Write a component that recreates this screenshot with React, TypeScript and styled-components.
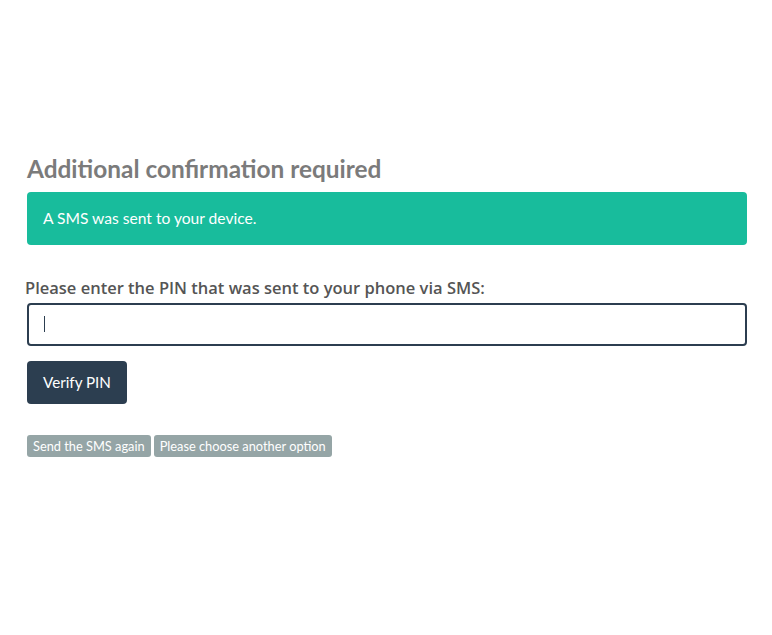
import React from "react";
import styled, { createGlobalStyle } from "styled-components";

const GlobalStyle = createGlobalStyle`
  html, body {
    margin: 0;
    padding: 0;
    background: #ffffff;
  }
  body {
    font-family: Lato, "Liberation Sans", sans-serif;
    font-size: 15px;
    line-height: 1.42857;
    color: #2c3e50;
  }
`;

const Page = styled.div`
  width: 772px;
  min-height: 635px;
  box-sizing: border-box;
  padding: 156px 25px 0 27px;
`;

const Title = styled.h3`
  margin: 0 0 9px;
  font-family: Lato, sans-serif;
  font-size: 24.4px;
  font-weight: 700;
  line-height: 1.1;
  color: #7b7b7b;
`;

const Alert = styled.div`
  box-sizing: border-box;
  height: 53px;
  padding: 15px 16px;
  border-radius: 4px;
  background: #18bc9c;
  color: #ffffff;
  font-size: 15.6px;
  line-height: 22px;
  margin-bottom: 33px;
`;

const Label = styled.label`
  display: block;
  margin: 0 0 5px -2px;
  font-family: "Open Sans", sans-serif;
  font-size: 16.5px;
  font-weight: 600;
  color: #555555;
  line-height: 20px;
`;

const PinInput = styled.div`
  box-sizing: border-box;
  height: 43px;
  border: 2px solid #2c3e50;
  border-radius: 4px;
  display: flex;
  align-items: center;
  padding-left: 15px;
  margin-bottom: 15px;
`;

const Caret = styled.span`
  width: 1px;
  height: 16px;
  background: #2c3e50;
`;

const PrimaryButton = styled.button`
  box-sizing: border-box;
  height: 43px;
  padding: 0 16px;
  border: none;
  border-radius: 4px;
  background: #2c3e50;
  color: #ffffff;
  font-family: Lato, sans-serif;
  font-size: 15.2px;
  cursor: pointer;
`;

const Options = styled.div`
  display: flex;
  gap: 3px;
  margin-top: 31px;
`;

const SmallButton = styled.button`
  box-sizing: border-box;
  height: 22px;
  padding: 0 6px;
  border: none;
  border-radius: 3px;
  background: #95a5a6;
  color: #ffffff;
  font-family: Lato, sans-serif;
  font-size: 12.8px;
  line-height: 22px;
  cursor: pointer;
`;

export default function App() {
  return (
    <Page>
      <GlobalStyle />
      <Title>Additional confirmation required</Title>
      <Alert>A SMS was sent to your device.</Alert>
      <Label>Please enter the PIN that was sent to your phone via SMS:</Label>
      <PinInput>
        <Caret />
      </PinInput>
      <PrimaryButton>Verify PIN</PrimaryButton>
      <Options>
        <SmallButton>Send the SMS again</SmallButton>
        <SmallButton>Please choose another option</SmallButton>
      </Options>
    </Page>
  );
}
